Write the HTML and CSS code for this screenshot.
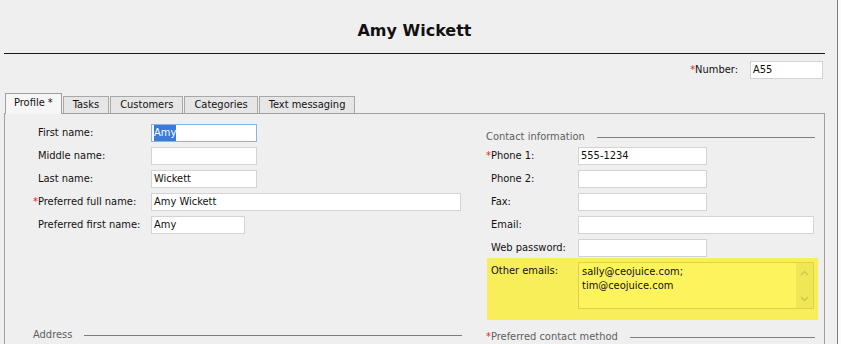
FILE: index.html
```html
<!DOCTYPE html>
<html>
<head>
<meta charset="utf-8">
<title>Amy Wickett</title>
<link rel="stylesheet" href="styles.css">
</head>
<body>
<div class="main">
  <div class="title">Amy Wickett</div>
  <div class="rule"></div>
  <div class="number-row">
    <span class="label"><span class="req">*</span>Number:</span>
    <div class="field w-num">A55</div>
  </div>
  <div class="tabs">
    <div class="tab active">Profile *</div>
    <div class="tab">Tasks</div>
    <div class="tab">Customers</div>
    <div class="tab">Categories</div>
    <div class="tab">Text messaging</div>
  </div>
  <div class="panel">
    <div class="col-left">
      <div class="rows">
        <div class="row"><span class="label lw-left">First name:</span><div class="field focus w-106"><span class="sel">Amy</span></div></div>
        <div class="row"><span class="label lw-left">Middle name:</span><div class="field w-106"></div></div>
        <div class="row"><span class="label lw-left">Last name:</span><div class="field w-106">Wickett</div></div>
        <div class="row"><span class="label lw-left"><span class="req hang">*</span>Preferred full name:</span><div class="field w-310">Amy Wickett</div></div>
        <div class="row"><span class="label lw-left">Preferred first name:</span><div class="field w-94">Amy</div></div>
      </div>
      <div class="heading address">Address</div>
    </div>
    <div class="col-right">
      <div class="heading">Contact information</div>
      <div class="rows rows-right">
        <div class="row"><span class="label lw-right"><span class="req hang">*</span>Phone 1:</span><div class="field w-129">555-1234</div></div>
        <div class="row"><span class="label lw-right">Phone 2:</span><div class="field w-129"></div></div>
        <div class="row"><span class="label lw-right">Fax:</span><div class="field w-129"></div></div>
        <div class="row"><span class="label lw-right">Email:</span><div class="field w-236"></div></div>
        <div class="row"><span class="label lw-right">Web password:</span><div class="field w-129"></div></div>
      </div>
      <div class="highlight">
        <span class="label lw-right">Other emails:</span>
        <div class="memo">
          <div class="memo-text">sally@ceojuice.com;<br>tim@ceojuice.com</div>
          <div class="memo-scroll">
            <svg width="9" height="6" viewBox="0 0 9 6"><path d="M1 5 L4.5 1.5 L8 5" fill="none" stroke="#cfc54c" stroke-width="1.4"/></svg>
            <svg width="9" height="6" viewBox="0 0 9 6"><path d="M1 1 L4.5 4.5 L8 1" fill="none" stroke="#cfc54c" stroke-width="1.4"/></svg>
          </div>
        </div>
      </div>
      <div class="heading pref"><span class="req">*</span>Preferred contact method</div>
    </div>
  </div>
</div>
<div class="edge"></div>
</body>
</html>
```
FILE: styles.css
```css
html, body {
  margin: 0;
  padding: 0;
}
body {
  width: 841px;
  height: 344px;
  overflow: hidden;
  display: flex;
  background: #f0efef;
  font-family: "DejaVu Sans Condensed", "DejaVu Sans", sans-serif;
  font-size: 11px;
  color: #111;
}
.main {
  flex: none;
  width: 837px;
  box-sizing: border-box;
  padding: 0 12px 0 4px;
}
.edge {
  flex: 1;
  border-left: 1px solid #7c7c7c;
  background: #fbfbfb;
}
.title {
  margin-top: 21px;
  height: 20px;
  line-height: 20px;
  text-align: center;
  font-family: "DejaVu Sans", sans-serif;
  font-weight: bold;
  font-size: 16px;
  color: #111;
}
.rule {
  margin-top: 12px;
  height: 1px;
  background: #1a1a1a;
}
.number-row {
  margin-top: 7px;
  display: flex;
  justify-content: flex-end;
  align-items: center;
  gap: 12px;
  padding-right: 2px;
}
.label {
  line-height: 14px;
  white-space: nowrap;
}
.req {
  color: #e0262b;
}
.req.hang {
  margin-left: -5px;
}
.field {
  box-sizing: border-box;
  height: 18px;
  line-height: 16px;
  padding: 0 2px;
  background: #fff;
  border: 1px solid #d3d3d3;
  white-space: nowrap;
  overflow: hidden;
}
.field.focus {
  border-color: #8ab4e0;
}
.sel {
  background: #3b7bd6;
  color: #fff;
  display: inline-block;
  line-height: 16px;
}
.w-num { width: 73px; }
.w-106 { width: 106px; }
.w-310 { width: 310px; }
.w-94 { width: 94px; }
.w-129 { width: 129px; }
.w-236 { width: 236px; }

.tabs {
  margin-top: 14px;
  height: 20px;
  display: flex;
  align-items: flex-end;
  gap: 1px;
  padding-left: 1px;
  position: relative;
  z-index: 1;
}
.tab {
  box-sizing: border-box;
  height: 17px;
  line-height: 15px;
  padding: 0 9px;
  border: 1px solid #a8a8a8;
  border-bottom: none;
  background: #e7e6e6;
  color: #111;
}
.tab.active {
  height: 21px;
  margin-bottom: -1px;
  line-height: 17px;
  padding: 0 8px;
  background: #f6f6f6;
  border-color: #a0a0a0;
}
.panel {
  display: flex;
  border: 1px solid #a0a0a0;
  border-bottom: none;
  height: 231px;
  padding-right: 6px;
}
.col-left {
  flex: none;
  width: 481px;
  box-sizing: border-box;
  padding: 10px 0 0 28px;
}
.col-right {
  flex: none;
  width: 332px;
  box-sizing: border-box;
  padding-top: 16px;
}
.rows {
  display: flex;
  flex-direction: column;
  gap: 5px;
  padding-left: 5px;
}
.rows-right {
  margin-top: 3px;
}
.row {
  display: flex;
  align-items: center;
  height: 18px;
}
.lw-left {
  width: 113px;
  flex: none;
}
.lw-right {
  width: 87px;
  flex: none;
}
.heading {
  display: flex;
  align-items: center;
  line-height: 14px;
  color: #5e5e5e;
  margin-right: 3px;
}
.heading::after {
  content: "";
  flex: 1;
  height: 1px;
  background: #7e7e7e;
  margin-left: 12px;
}
.heading.address {
  margin-top: 94px;
  margin-right: 24px;
}
.heading.pref {
  margin-top: 10px;
}
.highlight {
  margin-top: 1px;
  margin-left: 1px;
  height: 62px;
  box-sizing: border-box;
  padding: 4px 0 0 4px;
  background: #f7ee59;
  display: flex;
  align-items: flex-start;
}
.highlight .label {
  margin-top: 2px;
}
.memo {
  width: 236px;
  height: 47px;
  box-sizing: border-box;
  border: 1px solid #dcd24e;
  background: #fdf45d;
  display: flex;
}
.memo-text {
  flex: 1;
  padding: 2px 3px;
  line-height: 14px;
  color: #111;
}
.memo-scroll {
  width: 17px;
  background: #f0e757;
  display: flex;
  flex-direction: column;
  justify-content: space-between;
  align-items: center;
  padding: 7px 0 6px;
  box-sizing: border-box;
}
.memo-scroll svg {
  display: block;
}
```
